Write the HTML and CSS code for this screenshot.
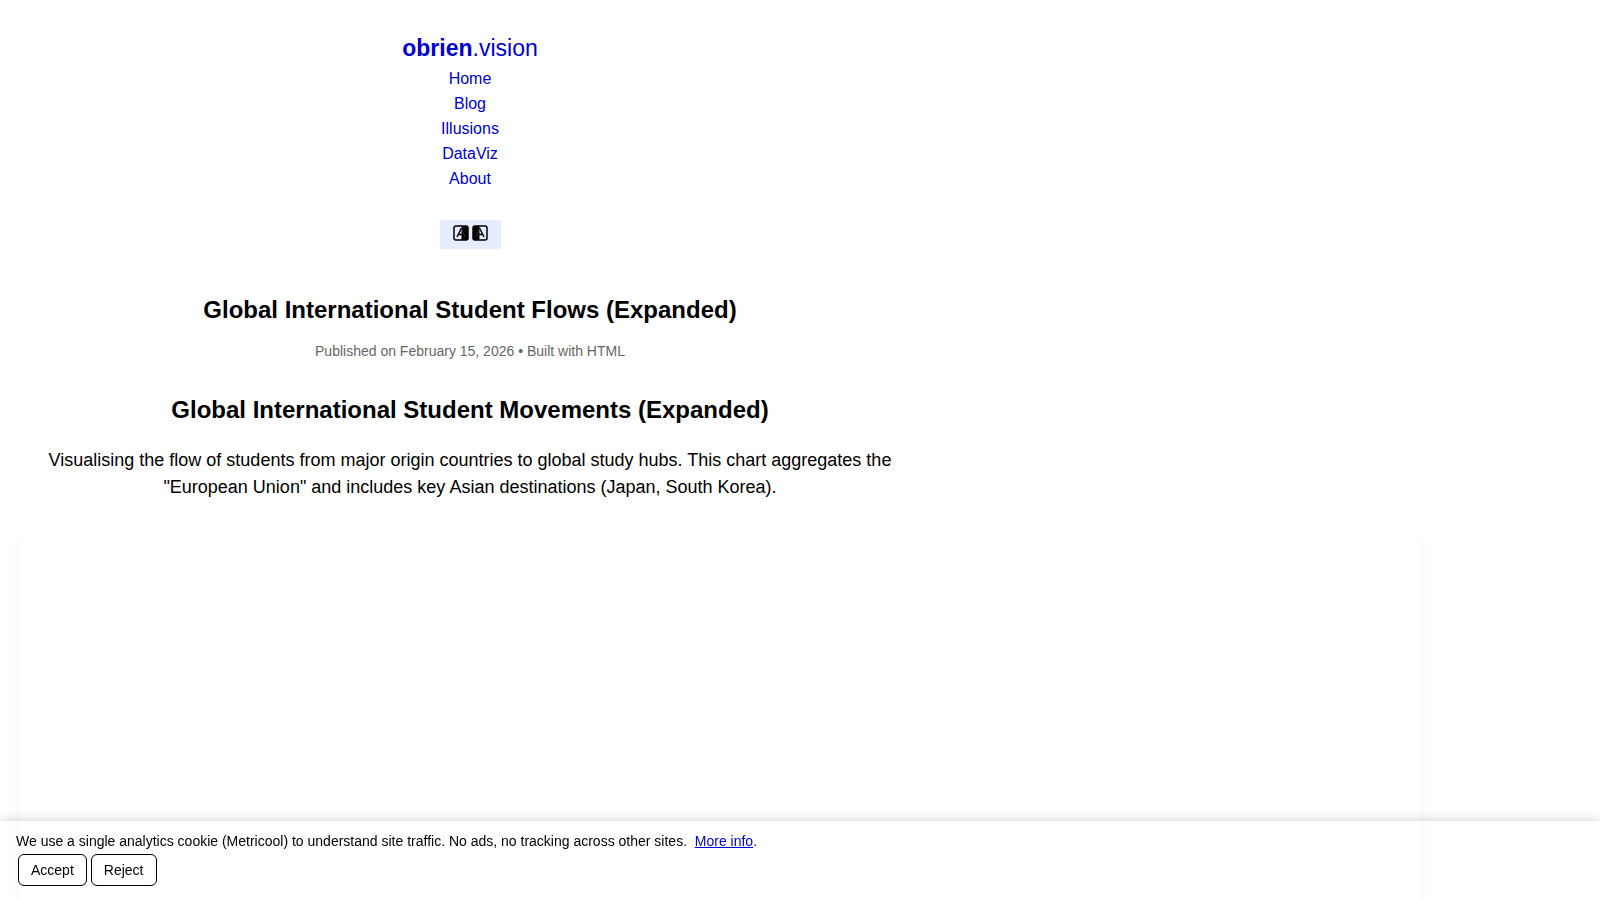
FILE: index.html
```
<!DOCTYPE html>
<html lang="en">
<head>
  <meta charset="UTF-8" />
  <title>Global International Student Flows (Expanded)</title>
  <meta name="viewport" content="width=device-width, initial-scale=1" />
  <link rel="stylesheet" href="styles.css">
</head>
<body>
  <header class="site-header">
    <a href="#" class="logo"><strong>obrien</strong>.vision</a>
    <nav>
      <ul class="nav-links">
        <li><a href="#">Home</a></li>
        <li><a href="#">Blog</a></li>
        <li><a href="#">Illusions</a></li>
        <li><a href="#">DataViz</a></li>
        <li><a href="#">About</a></li>
      </ul>
    </nav>
    <button type="button" class="theme-toggle" aria-label="Toggle theme">
      <svg width="37" height="18" viewBox="0 0 37 18" aria-hidden="true">
        <rect x="2" y="2" width="14" height="14" rx="2" fill="none" stroke="#000" stroke-width="1.5" />
        <path d="M5 13l4.500-9M6 10.500h4" fill="none" stroke="#000" stroke-width="1.500" />
        <path d="M9.500 2h4.500a2 2 0 0 1 2 2v10a2 2 0 0 1-2 2H9.500z" />
        <rect x="21" y="2" width="14" height="14" rx="2" fill="none" stroke="#000" stroke-width="1.5" />
        <path d="M32 13l-4.500-9M31 10.500h-4" fill="none" stroke="#000" stroke-width="1.500" />
        <path d="M27.500 2H23a2 2 0 0 0-2 2v10a2 2 0 0 0 2 2h4.500z" />
        <path d="M10 5l3 8M27 5l-3 8" fill="none" stroke="#e6edff" stroke-width="0.500" opacity="0.4" />
      </svg>
    </button>
  </header>

  <main>
    <div class="intro">
      <h1>Global International Student Flows (Expanded)</h1>
      <p class="meta">Published on February 15, 2026 • Built with HTML</p>
      <h2>Global International Student Movements (Expanded)</h2>
      <p class="lead">Visualising the flow of students from major origin countries to global study hubs. This chart aggregates the "European Union" and includes key Asian destinations (Japan, South Korea).</p>
    </div>
    <div class="chart"></div>
  </main>

  <div class="cookie-banner">
    <div>We use a single analytics cookie (Metricool) to understand site traffic. No ads, no tracking across other sites. &nbsp;<a href="#">More info</a>.</div>
    <div class="cookie-actions">
      <button type="button">Accept</button>
      <button type="button">Reject</button>
    </div>
  </div>
</body>
</html>
```
FILE: styles.css
```
body {
  display: flex;
  flex-direction: column;
  box-sizing: border-box;
  min-height: 100vh;
  margin: 0;
  padding: 32px 20px 0;
  font-family: "Liberation Sans", Arial, sans-serif;
  font-size: 16px;
  line-height: 25px;
  color: #000;
  background: #fff;
}
a {
  color: #0000d0;
}
.site-header,
.intro {
  max-width: 900px;
  text-align: center;
}
.site-header a {
  text-decoration: none;
}
.logo {
  display: block;
  font-size: 23px;
  line-height: 32px;
}
.nav-links {
  list-style: none;
  margin: 2px 0 29px;
  padding: 0;
}
.theme-toggle {
  display: block;
  margin: 0 auto;
  padding: 4px 12px 7px;
  border: none;
  background: #e6edff;
  cursor: pointer;
}
.theme-toggle svg {
  display: block;
}
main {
  display: flex;
  flex: 1;
  flex-direction: column;
}
h1,
h2 {
  margin: 0;
  font-size: 24px;
  line-height: 36px;
}
h1 {
  margin-top: 43px;
}
.meta {
  margin: 11px 0 29px;
  font-size: 14px;
  line-height: 24px;
  color: #666;
}
.lead {
  margin: 19px 0 28px;
  font-size: 18px;
  line-height: 27px;
}
.chart {
  flex: 1;
  max-width: 1400px;
  border-radius: 8px 8px 0 0;
  background: #fff;
  box-shadow: 0 6px 12px rgba(0, 0, 0, 0.04);
}
.cookie-banner {
  position: fixed;
  left: 0;
  right: 0;
  bottom: 0;
  padding: 8px 16px 14px;
  font-size: 14px;
  box-shadow: 0 0 12px rgba(0, 0, 0, 0.2);
}
.cookie-actions {
  display: flex;
  gap: 4px;
  padding-left: 2px;
}
.cookie-banner button {
  padding: 6px 12px;
  border: 1px solid #000;
  border-radius: 6px;
  background: #fff;
  color: #000;
  font-family: inherit;
  font-size: 14px;
  line-height: 18px;
  cursor: pointer;
}
```
